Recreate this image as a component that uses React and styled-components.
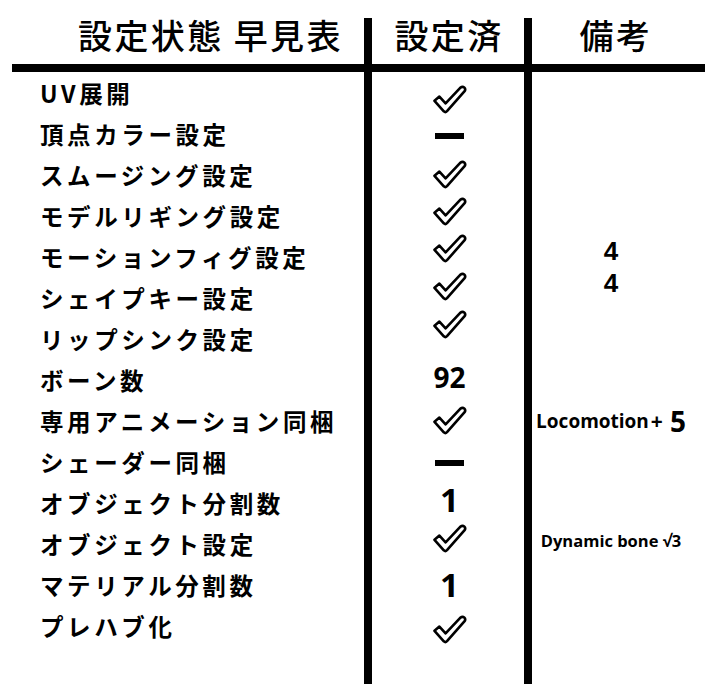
import React from 'react';
import styled, { createGlobalStyle } from 'styled-components';

const Global = createGlobalStyle`
  html, body { margin: 0; padding: 0; background: #fff; }
  body { width: 708px; height: 684px; overflow: hidden; }
`;

const Sheet = styled.div`
  width: 708px;
  height: 684px;
  box-sizing: border-box;
  padding-top: 18px;
  display: grid;
  grid-template-columns: 364px 8px 152px 8px 1fr;
  grid-template-rows: 46px 8px 3px repeat(14, 41px) 1fr;
  background: #fff;
  color: #000;
`;

const VRule = styled.div`
  grid-row: 1 / -1;
  grid-column: ${p => p.$col};
  background: #000;
  z-index: 1;
`;

const HRule = styled.div`
  grid-row: 2;
  grid-column: 1 / -1;
  margin: 0 3px 0 12px;
  background: #000;
`;

const HeadCell = styled.div`
  grid-row: 1;
  grid-column: ${p => p.$col};
  display: flex;
  align-items: flex-start;
  justify-content: ${p => (p.$left ? 'flex-start' : 'center')};
  padding-left: ${p => p.$padLeft || 0}px;
  padding-right: ${p => p.$padRight || 0}px;
  font-family: "Noto Sans CJK JP", sans-serif;
  font-weight: 500;
  font-size: 34px;
  line-height: 34px;
  letter-spacing: 2.4px;
  white-space: nowrap;
`;

const NameCell = styled.div`
  grid-row: ${p => p.$row};
  grid-column: 1;
  display: flex;
  align-items: center;
  padding-left: 40px;
  padding-bottom: 6px;
  font-family: "Noto Sans CJK JP", sans-serif;
  font-weight: 700;
  font-size: 23.5px;
  letter-spacing: 3.6px;
  white-space: nowrap;
`;

const MarkCell = styled.div`
  grid-row: ${p => p.$row};
  grid-column: 3;
  display: flex;
  align-items: center;
  justify-content: center;
  padding-left: 3px;
`;

const Shift = styled.span`
  display: inline-flex;
  align-items: center;
  transform: translateY(${p => p.$dy || 0}px);
`;

const Dash = styled.span`
  display: block;
  width: 29px;
  height: 6px;
  background: #000;
`;

const Value = styled.span`
  font-family: "Open Sans", sans-serif;
  font-weight: 700;
  font-size: ${p => p.$size}px;
  line-height: 0.8;
`;

const RemarkCell = styled.div`
  grid-row: ${p => p.$row};
  grid-column: 5;
  display: flex;
  align-items: center;
  justify-content: center;
  padding-right: 18px;
  font-family: "Open Sans", sans-serif;
  font-weight: 700;
  white-space: nowrap;
`;

const Note = styled.span`
  font-family: ${p => (p.$plain ? '"Liberation Sans", Arial, sans-serif' : '"Open Sans", sans-serif')};
  font-size: ${p => p.$size}px;
  line-height: 0.8;
  margin: 0 ${p => p.$gapRight || 0}px 0 ${p => p.$gapLeft || 0}px;
`;

const Check = () => (
  <svg width="35" height="29" viewBox="0 0 35 29" aria-hidden="true">
    <path
      d="M2.5 15.8 L7.4 11.6 L13.6 18.4 L28.2 2.8 Q30.6 0.9 32.4 2.6 Q34 4.3 32.4 6.4 L15 26.2 Q13.4 27.8 11.8 26.3 Z"
      fill="#fff"
      stroke="#000"
      strokeWidth="2.6"
      strokeLinejoin="round"
    />
  </svg>
);

const rows = [
  { name: 'UV展開', mark: 'check', dy: 4 },
  { name: '頂点カラー設定', mark: 'dash', dy: -1 },
  { name: 'スムージング設定', mark: 'check', dy: -3 },
  { name: 'モデルリギング設定', mark: 'check', dy: -7 },
  { name: 'モーションフィグ設定', mark: 'check', dy: -11, remark: 'four', rdy: -8 },
  { name: 'シェイプキー設定', mark: 'check', dy: -14, remark: 'four', rdy: -17 },
  { name: 'リップシンク設定', mark: 'check', dy: -17 },
  { name: 'ボーン数', value: '92', size: 28, dy: -5 },
  { name: '専用アニメーション同梱', mark: 'check', dy: -3, remark: 'loco', rdy: -2 },
  { name: 'シェーダー同梱', mark: 'dash', dy: -2 },
  { name: 'オブジェクト分割数', value: '1', size: 33, dy: -5 },
  { name: 'オブジェクト設定', mark: 'check', dy: -8, remark: 'dyn', rdy: -6 },
  { name: 'マテリアル分割数', value: '1', size: 33, dy: -2 },
  { name: 'プレハブ化', mark: 'check', dy: 1 },
];

const Remark = ({ kind }) => {
  if (kind === 'four') return <Note $plain $size={26}>4</Note>;
  if (kind === 'loco')
    return (
      <>
        <Note $size={19}>Locomotion</Note>
        <Note $size={21} $gapLeft={2} $gapRight={7}>+</Note>
        <Note $size={28}>5</Note>
      </>
    );
  if (kind === 'dyn') return <Note $size={16.5}>Dynamic bone √3</Note>;
  return null;
};

export default function App() {
  return (
    <>
      <Global />
      <Sheet>
        <HeadCell $col={1} $left $padLeft={78}>設定状態 早見表</HeadCell>
        <HeadCell $col={3} $padLeft={2}>設定済</HeadCell>
        <HeadCell $col={5} $padRight={8}>備考</HeadCell>
        <VRule $col={2} />
        <VRule $col={4} />
        <HRule />
        {rows.map((r, i) => {
          const row = i + 4;
          return (
            <React.Fragment key={r.name}>
              <NameCell $row={row}>{r.name}</NameCell>
              <MarkCell $row={row}>
                <Shift $dy={r.dy}>
                  {r.mark === 'check' && <Check />}
                  {r.mark === 'dash' && <Dash />}
                  {r.value && <Value $size={r.size}>{r.value}</Value>}
                </Shift>
              </MarkCell>
              {r.remark && (
                <RemarkCell $row={row}>
                  <Shift $dy={r.rdy}>
                    <Remark kind={r.remark} />
                  </Shift>
                </RemarkCell>
              )}
            </React.Fragment>
          );
        })}
      </Sheet>
    </>
  );
}
